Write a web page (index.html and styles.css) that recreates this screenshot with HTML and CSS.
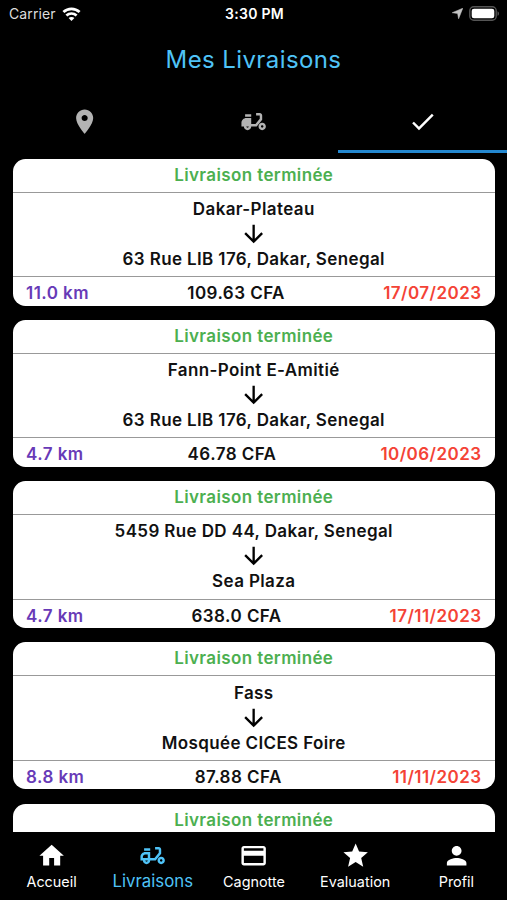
FILE: index.html
```
<!DOCTYPE html>
<html lang="fr">
<head>
    <meta charset="UTF-8">
    <meta name="viewport" content="width=device-width, initial-scale=1.0">
    <title>Mes Livraisons</title>
    <link rel="stylesheet" href="styles.css">
</head>
<body>
    <!-- shared icons -->
    <svg class="sprite">
        <symbol id="arrow" viewBox="0 0 24 24"><path d="M20 12l-1.41-1.41L13 16.17V4h-2v12.17l-5.58-5.59L4 12l8 8 8-8z"/></symbol>
    </svg>

    <div class="status-bar">
        <div class="carrier">
            <span>Carrier</span>
            <svg class="wifi" viewBox="0 0 18 14" fill="none" stroke="#fff" stroke-width="2.7">
                <path d="M.9 5.1C5.5.7 12.5.7 17.1 5.1"/>
                <path d="M3.9 8.5c2.9-2.7 7.3-2.7 10.2 0"/>
                <path d="M9 14l-2.9-2.9c1.6-1.4 4.2-1.4 5.8 0z" fill="#fff" stroke="none"/>
            </svg>
        </div>
        <div class="time">3:30 PM</div>
        <div class="indicators">
            <svg class="location" viewBox="0 0 10 10"><path d="M9.8.2L6 9.8 5.1 4.9.2 4.3z" fill="#c4c4c4" stroke="#c4c4c4" stroke-width=".5" stroke-linejoin="round"/></svg>
            <svg class="battery" viewBox="0 0 31 15">
                <rect x=".8" y=".8" width="26.4" height="13.4" rx="4" fill="none" stroke="#555" stroke-width="1.4"/>
                <rect x="2.7" y="2.7" width="22.6" height="9.6" rx="2.3" fill="#fff"/>
                <path d="M28.5 5.2c2 .8 2 3.8 0 4.6z" fill="#555"/>
            </svg>
        </div>
    </div>

    <h1>Mes Livraisons</h1>

    <div class="tabs">
        <div class="tab">
            <svg class="icon" viewBox="0 0 24 24"><path d="M12 2C8.13 2 5 5.13 5 9c0 5.25 7 13 7 13s7-7.75 7-13c0-3.87-3.13-7-7-7zm0 9.5c-1.38 0-2.5-1.12-2.5-2.5s1.12-2.5 2.5-2.5 2.5 1.12 2.5 2.5-1.12 2.5-2.5 2.5z"/></svg>
        </div>
        <div class="tab">
            <svg class="icon" viewBox="0 0 24 24"><path d="M19 7c0-1.1-.9-2-2-2h-3v2h3v2.65L13.52 14H10V9H6c-2.21 0-4 1.79-4 4v3h2c0 1.66 1.34 3 3 3s3-1.34 3-3h4.48L19 10.35V7zM7 17c-.55 0-1-.45-1-1h2c0 .55-.45 1-1 1z"/><path d="M5 6h5v2H5zM19 13c-1.66 0-3 1.34-3 3s1.34 3 3 3 3-1.34 3-3-1.34-3-3-3zm0 4c-.55 0-1-.45-1-1s.45-1 1-1 1 .45 1 1-.45 1-1 1z"/></svg>
        </div>
        <div class="tab active">
            <svg class="icon" viewBox="0 0 24 24"><path d="M9 16.17L4.83 12l-1.42 1.41L9 19 21 7l-1.41-1.41z"/></svg>
        </div>
    </div>

    <main>
        <div class="card">
            <div class="state">Livraison terminée</div>
            <div class="route">
                <p>Dakar-Plateau</p>
                <svg class="arrow"><use href="#arrow"/></svg>
                <p>63 Rue LIB 176, Dakar, Senegal</p>
            </div>
            <div class="infos">
                <span class="distance">11.0 km</span>
                <span class="price">109.63 CFA</span>
                <span class="date">17/07/2023</span>
            </div>
        </div>
        <div class="card">
            <div class="state">Livraison terminée</div>
            <div class="route">
                <p>Fann-Point E-Amitié</p>
                <svg class="arrow"><use href="#arrow"/></svg>
                <p>63 Rue LIB 176, Dakar, Senegal</p>
            </div>
            <div class="infos">
                <span class="distance">4.7 km</span>
                <span class="price">46.78 CFA</span>
                <span class="date">10/06/2023</span>
            </div>
        </div>
        <div class="card">
            <div class="state">Livraison terminée</div>
            <div class="route">
                <p>5459 Rue DD 44, Dakar, Senegal</p>
                <svg class="arrow"><use href="#arrow"/></svg>
                <p>Sea Plaza</p>
            </div>
            <div class="infos">
                <span class="distance">4.7 km</span>
                <span class="price">638.0 CFA</span>
                <span class="date">17/11/2023</span>
            </div>
        </div>
        <div class="card">
            <div class="state">Livraison terminée</div>
            <div class="route">
                <p>Fass</p>
                <svg class="arrow"><use href="#arrow"/></svg>
                <p>Mosquée CICES Foire</p>
            </div>
            <div class="infos">
                <span class="distance">8.8 km</span>
                <span class="price">87.88 CFA</span>
                <span class="date">11/11/2023</span>
            </div>
        </div>
        <div class="card cut">
            <div class="state">Livraison terminée</div>
        </div>
    </main>

    <nav>
        <a class="item">
            <svg class="icon" viewBox="0 0 24 24"><path d="M10 20v-6h4v6h5v-8h3L12 3 2 12h3v8z"/></svg>
            <span>Accueil</span>
        </a>
        <a class="item selected">
            <svg class="icon" viewBox="0 0 24 24"><path d="M19 7c0-1.1-.9-2-2-2h-3v2h3v2.65L13.52 14H10V9H6c-2.21 0-4 1.79-4 4v3h2c0 1.66 1.34 3 3 3s3-1.34 3-3h4.48L19 10.35V7zM4 14v-1c0-1.1.9-2 2-2h2v3H4zm3 3c-.55 0-1-.45-1-1h2c0 .55-.45 1-1 1z"/><path d="M5 6h5v2H5zM19 13c-1.66 0-3 1.34-3 3s1.34 3 3 3 3-1.34 3-3-1.34-3-3-3zm0 4c-.55 0-1-.45-1-1s.45-1 1-1 1 .45 1 1-.45 1-1 1z"/></svg>
            <span>Livraisons</span>
        </a>
        <a class="item">
            <svg class="icon" viewBox="0 0 24 24"><path d="M20 4H4c-1.11 0-1.99.89-1.99 2L2 18c0 1.11.89 2 2 2h16c1.11 0 2-.89 2-2V6c0-1.11-.89-2-2-2zm0 14H4v-6h16v6zm0-10H4V6h16v2z"/></svg>
            <span>Cagnotte</span>
        </a>
        <a class="item">
            <svg class="icon" viewBox="0 0 24 24"><path d="M12 17.27L18.18 21l-1.64-7.03L22 9.24l-7.19-.61L12 2 9.19 8.63 2 9.24l5.46 4.73L5.82 21z"/></svg>
            <span>Evaluation</span>
        </a>
        <a class="item">
            <svg class="icon" viewBox="0 0 24 24"><path d="M12 12c2.21 0 4-1.79 4-4s-1.79-4-4-4-4 1.79-4 4 1.79 4 4 4zm0 2c-2.67 0-8 1.34-8 4v2h16v-2c0-2.66-5.33-4-8-4z"/></svg>
            <span>Profil</span>
        </a>
    </nav>
</body>
</html>
```
FILE: styles.css
```
*{
    margin: 0;
    padding: 0;
    box-sizing: border-box;
}
body{
    height: 900px;
    display: flex;
    flex-direction: column;
    overflow: hidden;
    background-color: #000;
    color: #fff;
    font-family: Inter, "Liberation Sans", sans-serif;
}
.sprite{
    display: none;
}
.icon{
    width: 29.3px;
    height: 29.3px;
    fill: currentColor;
}

.status-bar{
    display: grid;
    grid-template-columns: 1fr auto 1fr;
    align-items: center;
    height: 27px;
    padding: 0 7px 0 9px;
    font-size: 14px;
}
.carrier{
    display: flex;
    align-items: center;
    gap: 6px;
    color: #ddd;
    letter-spacing: 0.1px;
}
.wifi{
    width: 19px;
    height: 14px;
}
.time{
    font-weight: 600;
    letter-spacing: 0.3px;
}
.indicators{
    display: flex;
    justify-content: flex-end;
    align-items: center;
    gap: 6px;
}
.location{
    width: 11px;
    height: 11px;
}
.battery{
    width: 31px;
    height: 15px;
}

h1{
    height: 65px;
    line-height: 66px;
    text-align: center;
    font-size: 24px;
    font-weight: 400;
    letter-spacing: 0.4px;
    color: #4fc3f7;
}

.tabs{
    display: grid;
    grid-template-columns: repeat(3, 1fr);
    height: 61px;
}
.tab{
    display: flex;
    justify-content: center;
    align-items: center;
    padding: 2px 0 0 1px;
    border-bottom: 3px solid transparent;
    color: #b3b3b3;
}
.tab.active{
    padding-left: 0;
    color: #fff;
    border-color: #2488d0;
}

main{
    flex: 1;
    min-height: 0;
    overflow: hidden;
    padding: 5.5px 12.5px 0 13px;
}
.card{
    height: 147px;
    margin-bottom: 14.3px;
    border-radius: 12.5px;
    background-color: #fff;
    color: #111;
    font-size: 17px;
    font-weight: 600;
    letter-spacing: 0.38px;
    text-align: center;
}
.state{
    height: 34px;
    line-height: 33px;
    border-bottom: 1px solid #999;
    color: #4caf50;
}
.cut .state{
    border: none;
}
.route{
    display: flex;
    flex-direction: column;
    align-items: center;
    height: 84.5px;
    padding-top: 5.3px;
    border-bottom: 1px solid #999;
}
.route p{
    line-height: 22px;
}
.arrow{
    width: 29.3px;
    height: 28px;
}
.infos{
    display: flex;
    justify-content: space-between;
    padding: 0 13px;
    line-height: 32px;
    letter-spacing: 0.45px;
}
.distance{
    color: #673ab7;
}
.date{
    color: #f44336;
}

nav{
    display: grid;
    grid-template-columns: repeat(5, 1fr);
    height: 68px;
    padding: 9px 0 0 1px;
}
.item{
    display: flex;
    flex-direction: column;
    align-items: center;
    font-size: 14.4px;
    line-height: 24px;
}
.selected{
    color: #4fc3f7;
    font-size: 16.8px;
    line-height: 22px;
}
```
